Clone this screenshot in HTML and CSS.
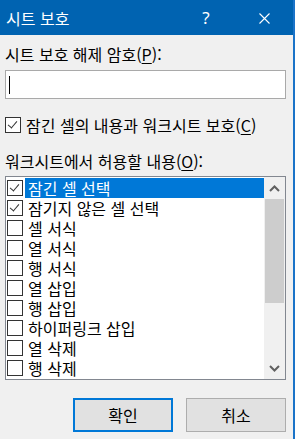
FILE: index.html
```html
<!DOCTYPE html>
<html lang="ko">
<head>
  <meta charset="UTF-8" />
  <meta name="viewport" content="width=device-width, initial-scale=1.0"/>
  <title>시트 보호</title>
  <link rel="stylesheet" href="styles.css">
</head>
<body>

  <div class="dialog">
    <div class="titlebar">
      <span class="title">시트 보호</span>
      <span class="title-btn help">?</span>
      <span class="title-btn close">
        <svg width="11" height="11" viewBox="0 0 11 11">
          <path d="M0.5 0.5 L10.5 10.5 M10.5 0.5 L0.5 10.5" stroke="#fff" stroke-width="1.1" fill="none"/>
        </svg>
      </span>
    </div>

    <div class="content">
      <div class="label">시트 보호 해제 암호(<u>P</u>):</div>
      <div class="password"><span class="caret"></span></div>

      <div class="protect">
        <span class="box checked"></span>
        <span>잠긴 셀의 내용과 워크시트 보호(<u>C</u>)</span>
      </div>

      <div class="label allow">워크시트에서 허용할 내용(<u>O</u>):</div>

      <div class="listbox">
        <div class="items">
          <div class="item selected"><span class="box checked"></span><span class="text">잠긴 셀 선택</span></div>
          <div class="item"><span class="box checked"></span><span class="text">잠기지 않은 셀 선택</span></div>
          <div class="item"><span class="box"></span><span class="text">셀 서식</span></div>
          <div class="item"><span class="box"></span><span class="text">열 서식</span></div>
          <div class="item"><span class="box"></span><span class="text">행 서식</span></div>
          <div class="item"><span class="box"></span><span class="text">열 삽입</span></div>
          <div class="item"><span class="box"></span><span class="text">행 삽입</span></div>
          <div class="item"><span class="box"></span><span class="text">하이퍼링크 삽입</span></div>
          <div class="item"><span class="box"></span><span class="text">열 삭제</span></div>
          <div class="item"><span class="box"></span><span class="text">행 삭제</span></div>
        </div>
        <div class="scrollbar">
          <div class="arrow">
            <svg width="11" height="7" viewBox="0 0 11 7"><polyline points="1,6 5.5,1.5 10,6" stroke="#606060" stroke-width="2" fill="none"/></svg>
          </div>
          <div class="thumb"></div>
          <div class="track"></div>
          <div class="arrow">
            <svg width="11" height="7" viewBox="0 0 11 7"><polyline points="1,1 5.5,5.5 10,1" stroke="#606060" stroke-width="2" fill="none"/></svg>
          </div>
        </div>
      </div>

      <div class="buttons">
        <button class="btn default">확인</button>
        <button class="btn">취소</button>
      </div>
    </div>
  </div>

</body>
</html>
```

FILE: styles.css
```css
body {
  margin: 0;
  font-family: "Noto Sans CJK KR", "Noto Sans", sans-serif;
  font-size: 16px;
  color: #000;
  background: #f0f0f0;
}

.dialog {
  width: 293px;
  height: 439px;
  border-right: 2px solid #1a73c8;
  background: #f0f0f0;
}

.titlebar {
  height: 35px;
  background: #0063b1;
  color: #fff;
  display: flex;
  align-items: center;
}

.title {
  padding-left: 6px;
  flex: 1;
  line-height: 20px;
}

.title-btn {
  width: 58px;
  height: 35px;
  display: flex;
  align-items: center;
  justify-content: center;
}

.help {
  font-family: "Noto Sans", sans-serif;
  font-size: 17px;
}

.close svg {
  margin-top: 1px;
}

.content {
  padding: 0 7px 0 5px;
}

.label {
  margin-top: 9px;
  line-height: 20px;
}

.allow {
  margin-top: 16px;
}

u {
  text-underline-offset: 2px;
}

.password {
  margin-top: 6px;
  height: 27px;
  border: 1px solid #a9a9a9;
  background: #fff;
  display: flex;
  align-items: center;
}

.caret {
  width: 1px;
  height: 18px;
  margin-left: 3px;
  background: #000;
}

.protect {
  margin-top: 16px;
  display: flex;
  align-items: center;
  gap: 5px;
  line-height: 20px;
}

.box {
  width: 14px;
  height: 14px;
  border: 1px solid #333;
  background: #fff;
  flex: none;
  position: relative;
}

.box.checked::after {
  content: "";
  position: absolute;
  left: 4px;
  top: 1px;
  width: 4px;
  height: 8px;
  border: solid #333;
  border-width: 0 1.5px 1.5px 0;
  transform: rotate(40deg);
}

.listbox {
  margin-top: 5px;
  border: 1px solid #828790;
  background: #fff;
  display: flex;
  height: 202px;
}

.items {
  flex: 1;
  padding-top: 1px;
}

.item {
  height: 20px;
  display: flex;
  align-items: center;
  padding-left: 1px;
}

.item .box {
  margin-top: -1px;
}

.item .text {
  margin-left: 2px;
  padding-left: 3px;
  line-height: 20px;
  flex: 1;
}

.item.selected .text {
  background: #0078d7;
  color: #fff;
}

.scrollbar {
  width: 21px;
  background: #f0f0f0;
  display: flex;
  flex-direction: column;
}

.arrow {
  height: 22px;
  display: flex;
  align-items: center;
  justify-content: center;
}

.thumb {
  height: 104px;
  margin: 0 1px;
  background: #cdcdcd;
}

.track {
  flex: 1;
}

.buttons {
  margin-top: 18px;
  display: flex;
  justify-content: flex-end;
  gap: 13px;
}

.btn {
  width: 100px;
  height: 34px;
  font-family: inherit;
  font-size: 16px;
  color: #000;
  background: #e1e1e1;
  border: 1px solid #adadad;
  padding: 0;
}

.btn.default {
  border: 2px solid #0078d7;
}
```
